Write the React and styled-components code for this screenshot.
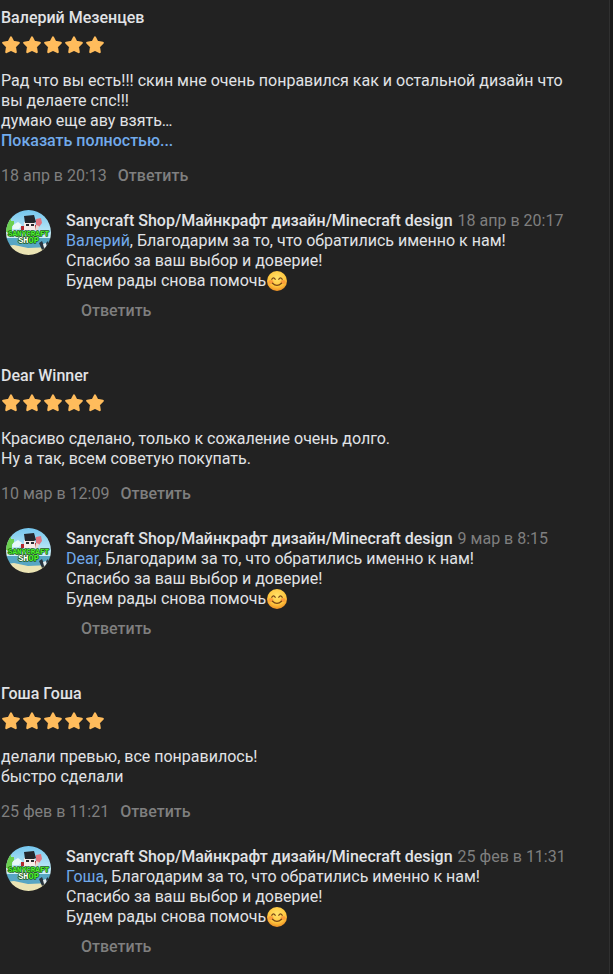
import React from "react";
import styled, { createGlobalStyle } from "styled-components";

const GlobalStyle = createGlobalStyle`
  * { box-sizing: border-box; }
  body {
    margin: 0;
    background: #191919;
    color: #e1e3e6;
    font: 400 16px/20px Roboto, "Noto Sans", sans-serif;
  }
`;

const Panel = styled.main`
  margin-right: 3px;
  padding: 8px 24px 8px 1px;
  min-height: 100vh;
  background: #222222;
  border-right: 1px solid #303030;
`;

const Review = styled.article`
  display: flex;
  flex-direction: column;
  align-items: flex-start;
  padding-bottom: 45px;
`;

const Author = styled.h2`
  margin: 0;
  font-size: 16px;
  font-weight: 500;
`;

const Stars = styled.div`
  display: flex;
  gap: 1px;
  height: 20px;
  margin: 7px 0 16px;
`;

const Message = styled.p`
  margin: 0;
`;

const Line = styled.span`
  display: block;
`;

const TextButton = styled.button`
  padding: 0;
  border: 0;
  background: none;
  font: inherit;
  font-weight: 500;
  color: ${(p) => (p.$accent ? "#71aaeb" : "#7f7f7f")};
  cursor: pointer;
`;

const Meta = styled.div`
  display: flex;
  gap: 11px;
  margin-top: 15px;
`;

const Time = styled.time`
  color: #7f7f7f;
`;

const Reply = styled.section`
  display: grid;
  grid-template-columns: 45px 1fr;
  column-gap: 15px;
  width: 100%;
  margin-top: 24px;
  padding-left: 5px;
`;

const ReplyBody = styled.div`
  padding-top: 1px;
`;

const ReplyHeader = styled.header`
  display: flex;
  flex-wrap: wrap;
  column-gap: 5px;
`;

const ReplyActions = styled.div`
  padding: 10px 0 0 15px;
`;

const Mention = styled.a`
  color: #71aaeb;
  text-decoration: none;
`;

const EmojiIcon = styled.svg`
  width: 20px;
  height: 20px;
  vertical-align: top;
  margin-left: 1px;
`;

const AvatarIcon = styled.svg`
  display: block;
  width: 45px;
  height: 45px;
`;

const StarIcon = styled.svg`
  width: 20px;
  height: 20px;
`;

const Star = () => (
  <StarIcon viewBox="0 0 20 20" aria-hidden="true">
    <path
      d="M10 2.4l2.3 4.5 5.5.9-3.9 3.8.8 5.5-4.7-2.4-4.7 2.4.8-5.5-3.9-3.8 5.5-.9z"
      fill="#ffbc5c" stroke="#ffbc5c" strokeWidth="2.2" strokeLinejoin="round"
    />
  </StarIcon>
);

const Smile = () => (
  <EmojiIcon viewBox="0 0 20 20" role="img" aria-label="😊">
    <defs>
      <radialGradient id="face" cx="50%" cy="35%" r="65%">
        <stop offset="0" stopColor="#ffe36a" />
        <stop offset=".65" stopColor="#ffc63e" />
        <stop offset="1" stopColor="#ee8f24" />
      </radialGradient>
    </defs>
    <circle cx="10" cy="10" r="10" fill="url(#face)" />
    <ellipse cx="4" cy="11" rx="2.6" ry="2" fill="#f98a36" opacity=".7" />
    <ellipse cx="16" cy="11" rx="2.6" ry="2" fill="#f98a36" opacity=".7" />
    <path
      d="M4.8 8.3Q6.5 5.3 8.2 8.3M11.8 8.3Q13.5 5.3 15.2 8.3M5.5 12.3Q10 16.5 14.5 12.3"
      fill="none" stroke="#784617" strokeWidth="1.3" strokeLinecap="round"
    />
  </EmojiIcon>
);

const Avatar = () => (
  <AvatarIcon viewBox="0 0 45 45" role="img" aria-label="Sanycraft Shop">
    <defs>
      <clipPath id="round"><circle cx="22.5" cy="22.5" r="22.5" /></clipPath>
      <linearGradient id="sky" x2="0" y2="1">
        <stop offset="0" stopColor="#74c6ee" />
        <stop offset="1" stopColor="#d2f2f8" />
      </linearGradient>
    </defs>
    <g clipPath="url(#round)">
      <path d="M0 0h45v29H0z" fill="url(#sky)" />
      <path d="M0 28h45v10H0z" fill="#58a6c4" />
      <path d="M0 36l8-1 14 3 23-1v8H0z" fill="#ebe4b4" />
      <path d="M0 7h5v4h3v5H6v6H0z" fill="#6bd04f" />
      <path d="M7 15l5-3 4 3-3 4H6z" fill="#e8f8fa" />
      <path d="M15 16h5v4h-5zM27 15h3v5h-3z" fill="#b3262d" />
      <path d="M18 12h11v8H18z" fill="#f6ebe8" />
      <path d="M18 6l10-1 2 7-2 1H19z" fill="#23262b" />
      <path d="M20 14h3v2h-3zM25 14h3v2h-3z" fill="#2b2b31" />
      <path d="M30 9l5-1 1 5-3 4-3-1z" fill="#e27680" />
      <path d="M30 15l3 1-1 4h-3z" fill="#e9d8d0" />
      <path d="M33 33l3-2 3 7-3 2zM39 34l3-3 1 5-3 3z" fill="#29343e" />
      <path d="M37 34l3-1 1 4-3 1z" fill="#e7eef0" />
      <g fontFamily="Liberation Mono, monospace" fontWeight="700" textAnchor="middle"
        stroke="#1b5a14" strokeWidth="1.4" paintOrder="stroke" strokeLinejoin="round">
        <text x="22.5" y="26" fontSize="7.6" fill="#4df02f">SANYCRAFT</text>
        <text x="22.5" y="33" fontSize="8.6" fill="#ffffff">SH<tspan fill="#4df02f">OP</tspan></text>
      </g>
    </g>
  </AvatarIcon>
);

const reviews = [
  {
    author: "Валерий Мезенцев",
    lines: [
      "Рад что вы есть!!! скин мне очень понравился как и остальной дизайн что вы делаете спс!!!",
      "думаю еще аву взять…",
    ],
    more: true,
    date: "18 апр в 20:13",
    mention: "Валерий",
    replyDate: "18 апр в 20:17",
  },
  {
    author: "Dear Winner",
    lines: ["Красиво сделано, только к сожаление очень долго.", "Ну а так, всем советую покупать."],
    date: "10 мар в 12:09",
    mention: "Dear",
    replyDate: "9 мар в 8:15",
  },
  {
    author: "Гоша Гоша",
    lines: ["делали превью, все понравилось!", "быстро сделали"],
    date: "25 фев в 11:21",
    mention: "Гоша",
    replyDate: "25 фев в 11:31",
  },
];

export default function App() {
  return (
    <>
      <GlobalStyle />
      <Panel>
        {reviews.map((r) => (
          <Review key={r.author}>
            <Author>{r.author}</Author>
            <Stars role="img" aria-label="5 из 5">
              {[1, 2, 3, 4, 5].map((n) => <Star key={n} />)}
            </Stars>
            <Message>
              {r.lines.map((line) => <Line key={line}>{line}</Line>)}
            </Message>
            {r.more && <TextButton $accent>Показать полностью...</TextButton>}
            <Meta>
              <Time>{r.date}</Time>
              <TextButton>Ответить</TextButton>
            </Meta>
            <Reply>
              <Avatar />
              <ReplyBody>
                <ReplyHeader>
                  <Author as="h3">Sanycraft Shop/Майнкрафт дизайн/Minecraft design</Author>
                  <Time>{r.replyDate}</Time>
                </ReplyHeader>
                <Message>
                  <Line>
                    <Mention href="#">{r.mention}</Mention>, Благодарим за то, что обратились именно к нам!
                  </Line>
                  <Line>Спасибо за ваш выбор и доверие!</Line>
                  <Line>Будем рады снова помочь<Smile /></Line>
                </Message>
                <ReplyActions>
                  <TextButton>Ответить</TextButton>
                </ReplyActions>
              </ReplyBody>
            </Reply>
          </Review>
        ))}
      </Panel>
    </>
  );
}
